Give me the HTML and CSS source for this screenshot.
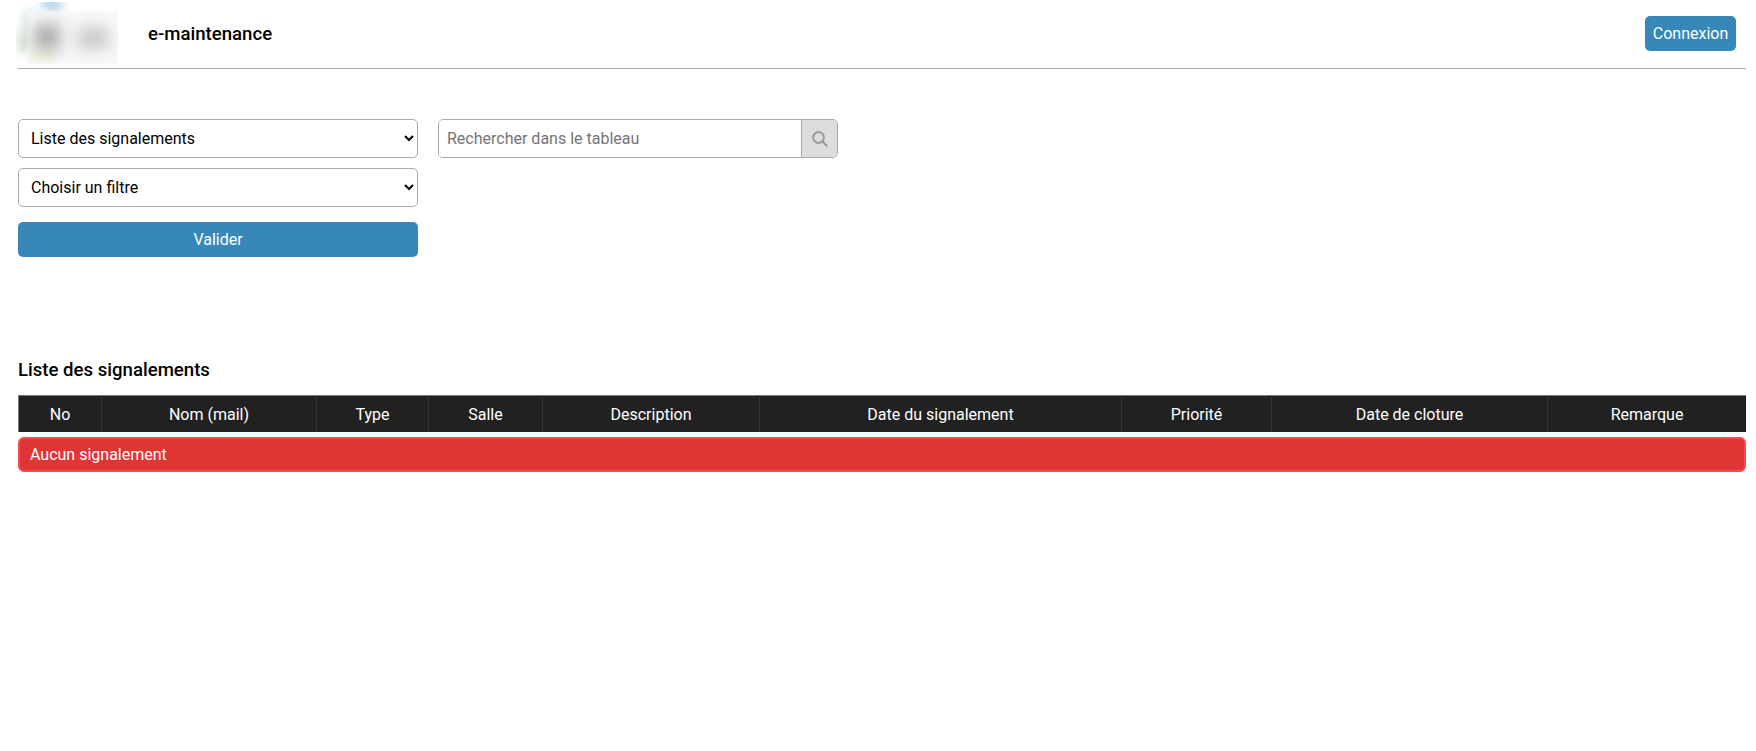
FILE: index.html
```html
<!DOCTYPE html>
<html lang="fr">
<head>
<meta charset="utf-8">
<title>e-maintenance</title>
<link rel="stylesheet" href="styles.css">
</head>
<body>
<div class="page">
  <header class="topbar">
    <div class="logo" aria-hidden="true">
      <span class="logo-sky"></span>
      <span class="logo-pale"></span>
      <span class="logo-green"></span>
      <span class="logo-panel"></span>
      <span class="logo-yellow"></span>
      <span class="logo-dark"></span>
      <span class="logo-grey"></span>
    </div>
    <div class="brand">e-maintenance</div>
    <button class="btn btn-login" type="button">Connexion</button>
  </header>
  <section class="filters">
    <form class="filter-col">
      <select class="field"><option>Liste des signalements</option></select>
      <select class="field"><option>Choisir un filtre</option></select>
      <button class="btn btn-submit" type="button">Valider</button>
    </form>
    <div class="search">
      <input class="search-input" type="text" placeholder="Rechercher dans le tableau">
      <span class="search-addon">
        <svg class="search-icon" viewBox="0 0 16 16" width="16" height="16" aria-hidden="true"><circle cx="6.5" cy="6.5" r="5.4"/><path d="M10.5 10.5 15.2 15.2"/></svg>
      </span>
    </div>
  </section>
  <h2 class="list-title">Liste des signalements</h2>
  <table class="grid">
    <thead>
      <tr>
        <th class="c-no">No</th>
        <th class="c-nom">Nom (mail)</th>
        <th class="c-type">Type</th>
        <th class="c-salle">Salle</th>
        <th class="c-desc">Description</th>
        <th class="c-date">Date du signalement</th>
        <th class="c-prio">Priorité</th>
        <th class="c-clot">Date de cloture</th>
        <th class="c-rem">Remarque</th>
      </tr>
    </thead>
  </table>
  <div class="alert">Aucun signalement</div>
</div>
</body>
</html>
```
FILE: styles.css
```css
* { box-sizing: border-box; }
html, body { margin: 0; background: #fff; }
body { font-family: Roboto, "Liberation Sans", sans-serif; font-size: 16px; color: #000; }
.page { padding: 0 10px 0 18px; min-height: 751px; }

.topbar { display: flex; align-items: center; height: 69px; padding: 0 10px 2px 0; border-bottom: 1px solid #aaa; }
.logo { position: relative; flex: none; width: 102px; height: 62px; margin-left: -2px; overflow: hidden; }
.logo span { position: absolute; display: block; }
.logo-sky { left: 26px; top: -8px; width: 20px; height: 18px; background: #bcd8f0; filter: blur(5px); }
.logo-pale { left: 6px; top: 8px; width: 14px; height: 24px; background: #e4eeee; filter: blur(4px); }
.logo-green { left: 1px; top: 30px; width: 14px; height: 20px; background: #d8e6d4; filter: blur(4px); }
.logo-panel { left: 12px; top: 9px; width: 90px; height: 53px; background: #f8f8f8; filter: blur(1px); }
.logo-yellow { left: 16px; top: 48px; width: 22px; height: 10px; background: #edf2d2; filter: blur(4px); }
.logo-dark { left: 18px; top: 22px; width: 26px; height: 26px; background: #a8aca8; filter: blur(8px); }
.logo-grey { left: 62px; top: 26px; width: 30px; height: 20px; background: #c4c4c4; filter: blur(8px); }
.brand { margin: 2px 0 0 30px; font-size: 18.6px; font-weight: 500; }
.btn { border: 0; border-radius: 5px; background: #3788b9; color: #fff; font: inherit; }
.btn-login { margin-left: auto; width: 91px; height: 35px; padding: 0; }

.filters { display: flex; align-items: flex-start; gap: 20px; margin-top: 50px; }
.filter-col { display: flex; flex-direction: column; width: 400px; }
.field { width: 100%; height: 39px; margin-bottom: 10px; padding: 0 8px; border: 1px solid #aaa; border-radius: 5px; background: #fff; color: #000; font: inherit; }
.btn-submit { width: 100%; height: 35px; margin-top: 5px; }
.search { display: flex; width: 400px; height: 39px; border: 1px solid #aaa; border-radius: 5px; overflow: hidden; }
.search-input { flex: 1; min-width: 0; padding: 0 8px; border: 0; outline: 0; font: inherit; }
.search-input::placeholder { color: #757575; opacity: 1; }
.search-addon { display: flex; align-items: center; justify-content: center; width: 36px; background: #ddd; border-left: 1px solid #aaa; }
.search-icon { fill: none; stroke: #999; stroke-width: 2; }

.list-title { margin: 101px 0 13px; font-size: 18.6px; font-weight: 500; line-height: 24px; }
.grid { width: 100%; table-layout: fixed; border-collapse: separate; border-spacing: 0; background: #212121; color: #fff; }
.grid th { height: 37px; padding: 0; font-weight: 400; text-align: center; border-left: 1px solid #333; border-top: 1px solid #777; }
.grid th:first-child { border-left-color: #777; }
.c-no { width: 83px; }
.c-nom { width: 215px; }
.c-type { width: 112px; }
.c-salle { width: 114px; }
.c-desc { width: 217px; }
.c-date { width: 362px; }
.c-prio { width: 150px; }
.c-clot { width: 276px; }
.alert { height: 35px; margin-top: 5px; padding: 0 10px; line-height: 31px; background: #e03535; border: 2px solid #f94a4e; border-radius: 6px; color: #fff; }
```
